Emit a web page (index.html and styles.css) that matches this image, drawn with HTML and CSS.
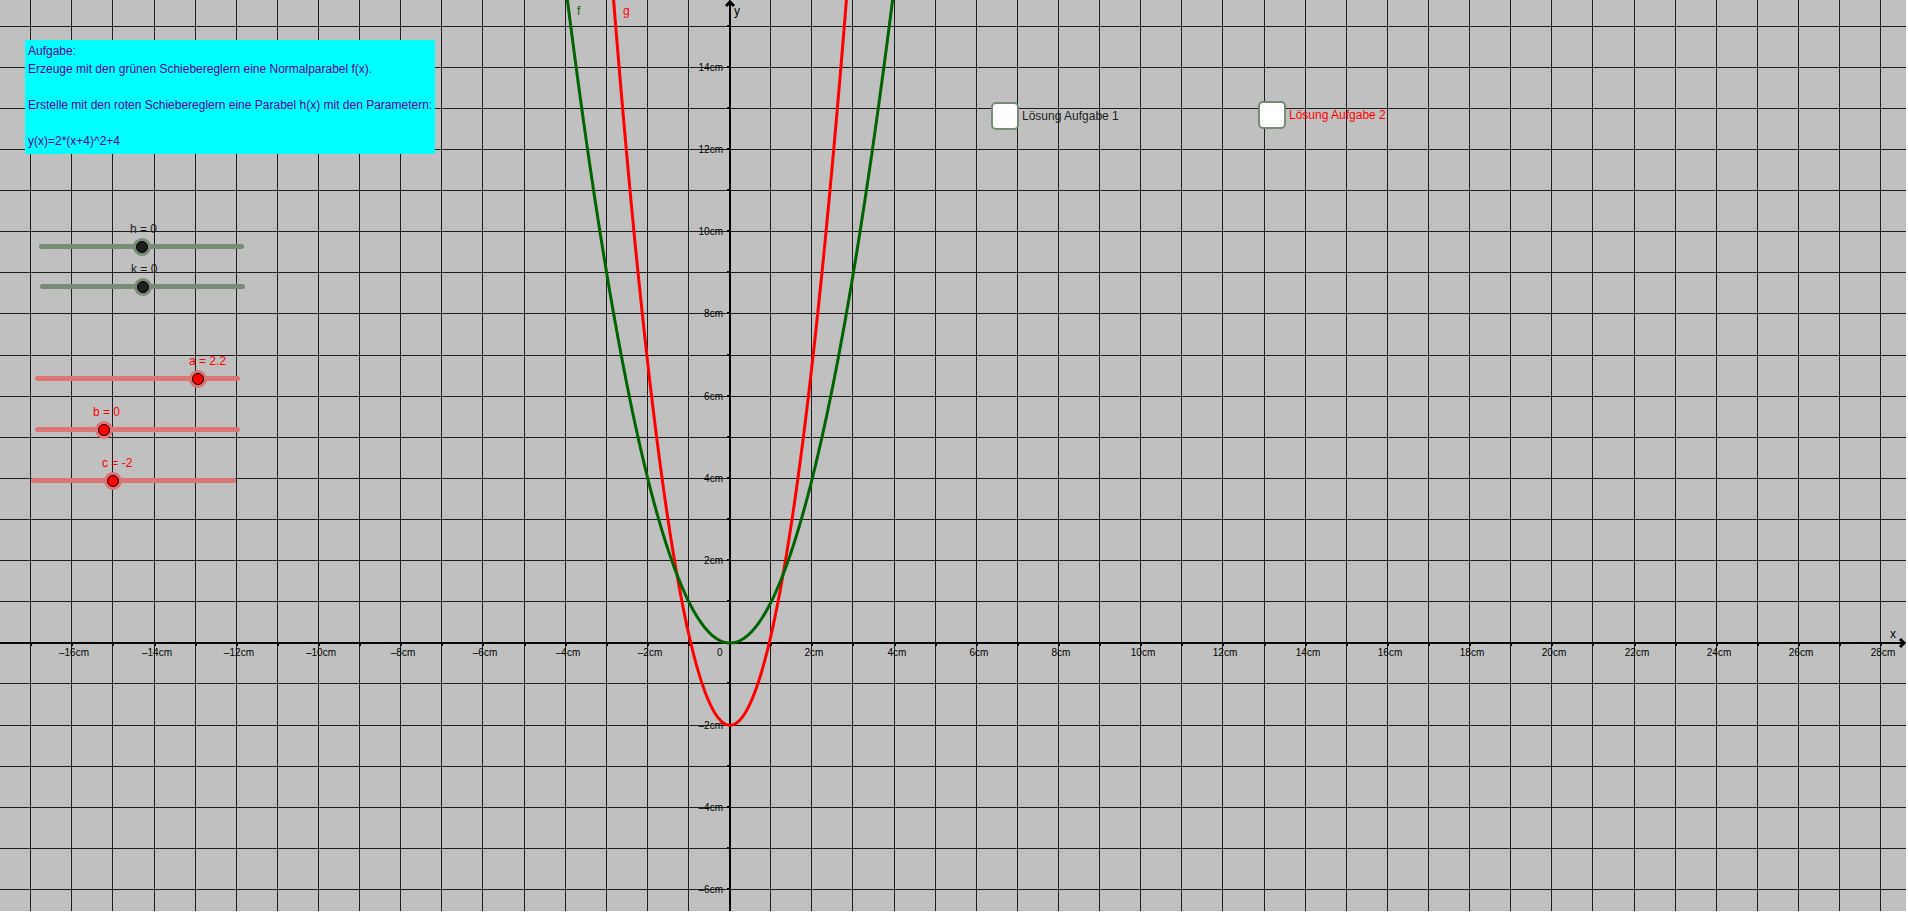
FILE: index.html
```html
<!DOCTYPE html>
<html lang="de">
<head>
<meta charset="utf-8">
<title>Normalparabel</title>
<link rel="stylesheet" href="styles.css">
</head>
<body>
<main class="board">
  <svg class="plot" id="plot" role="img" aria-label="Koordinatensystem mit den Parabeln f und g"></svg>

  <section class="task">
    <p>Aufgabe:</p>
    <p>Erzeuge mit den grünen Schiebereglern eine Normalparabel f(x).</p>
    <p class="spaced">Erstelle mit den roten Schiebereglern eine Parabel h(x) mit den Parametern:</p>
    <p class="spaced">y(x)=2*(x+4)^2+4</p>
  </section>

  <div class="slider slider-h"><label for="h">h = 0</label><input type="range" id="h" min="-5" max="5" step="0.1" value="0"></div>
  <div class="slider slider-k"><label for="k">k = 0</label><input type="range" id="k" min="-5" max="5" step="0.1" value="0"></div>
  <div class="slider red slider-a"><label for="a">a = 2.2</label><input type="range" id="a" min="-5" max="4" step="0.1" value="2.2"></div>
  <div class="slider red slider-b"><label for="b">b = 0</label><input type="range" id="b" min="-5" max="10" step="0.1" value="0"></div>
  <div class="slider red slider-c"><label for="c">c = -2</label><input type="range" id="c" min="-10" max="10" step="0.1" value="-2"></div>

  <label class="check check-one"><input type="checkbox">Lösung Aufgabe 1</label>
  <label class="check check-two"><input type="checkbox">Lösung Aufgabe 2</label>
</main>
<script src="plot.js"></script>
</body>
</html>
```
FILE: styles.css
```css
* { box-sizing: border-box; }

body {
  margin: 0;
  background: #fff;
  color: #1e1e1e;
  font: 12px/18px "Liberation Sans", Arial, sans-serif;
}

.board {
  position: relative;
  height: 100vh;
  overflow: hidden;
  border: solid #fff;
  border-width: 0 2px 2px 0;
  background: #c0c0c0;
}

.plot { display: block; width: 100%; height: 100%; }
.grid { stroke: #1e1e1e; stroke-width: 1; fill: none; shape-rendering: crispEdges; }
.axis { stroke: #000; stroke-width: 2; fill: none; }
.arrow { stroke: #000; stroke-width: 3; fill: none; }
.tick { stroke: #000; stroke-width: 2; fill: none; shape-rendering: crispEdges; }
.curve { stroke-width: 3; fill: none; }
.curve-f { stroke: #006400; }
.curve-g { stroke: #f00; }
.unit { font-size: 10px; fill: #000; }
.name { font-size: 12px; fill: #000; }
.name-f { fill: #006400; }
.name-g { fill: #f00; }

.task {
  position: absolute;
  left: 25px;
  top: 40px;
  padding: 2px 3px 4px;
  background: #0ff;
  color: #50009b;
}
.task p { margin: 0; white-space: nowrap; }
.task .spaced { margin-top: 18px; }

.slider { --tone: #1e1e1e; --rail: #778b77; position: absolute; z-index: 0; width: 205px; }
.slider.red { --tone: #f00; --rail: #dd7575; color: #f00; }
.slider::after {
  content: "";
  position: absolute;
  z-index: -1;
  left: 0;
  right: 0;
  bottom: 7px;
  height: 5px;
  border-radius: 3px;
  background: var(--rail);
}
.slider label { display: block; width: max-content; height: 16px; line-height: 14px; }
.slider input {
  display: block;
  appearance: none;
  width: 213px;
  height: 18px;
  margin: 0 0 0 -4px;
  background: transparent;
}
.slider input::-webkit-slider-runnable-track { height: 12px; }
.slider input::-webkit-slider-thumb {
  appearance: none;
  width: 12px;
  height: 12px;
  border: 1px solid #000;
  border-radius: 50%;
  background: var(--tone);
  box-shadow: 0 0 0 3px var(--rail);
}
.slider-h { left: 39px; top: 222px; }
.slider-h label { margin-left: 91px; }
.slider-k { left: 40px; top: 262px; }
.slider-k label { margin-left: 91px; }
.slider-a { left: 35px; top: 354px; }
.slider-a label { margin-left: 154px; }
.slider-b { left: 35px; top: 405px; }
.slider-b label { margin-left: 58px; }
.slider-c { left: 31px; top: 456px; }
.slider-c label { margin-left: 71px; }

.check { position: absolute; display: flex; align-items: center; gap: 3px; }
.check input {
  appearance: none;
  width: 28px;
  height: 28px;
  margin: 0;
  border: 2px solid #778b77;
  border-radius: 5px;
  background: #fff;
}
.check-one { left: 991px; top: 102px; }
.check-two { left: 1258px; top: 101px; color: #f00; }
```
FILE: plot.js
```js
const svg = document.getElementById('plot');
const unit = 41.11;
const origin = { x: 729.6, y: 642.8 };

function add(tag, attrs, text) {
  const node = document.createElementNS('http://www.w3.org/2000/svg', tag);
  for (const key in attrs) node.setAttribute(key, attrs[key]);
  if (text !== undefined) node.textContent = text;
  svg.appendChild(node);
}

function curve(name, fn) {
  let d = '';
  for (let x = -4.2; x <= 4.2; x += 0.02) {
    const px = 730 + x * unit;
    const py = 643 - fn(x) * unit;
    d += (d ? 'L' : 'M') + px.toFixed(2) + ' ' + py.toFixed(2);
  }
  add('path', { class: 'curve curve-' + name, d });
}

function draw() {
  svg.replaceChildren();
  const { width, height } = svg.getBoundingClientRect();
  const label = n => String(n).replace('-', '–') + 'cm';
  let grid = '', ticks = '';
  const firstX = Math.ceil(-origin.x / unit), lastX = Math.floor((width - origin.x) / unit);
  const lastY = Math.floor(origin.y / unit), firstY = -Math.floor((height - origin.y) / unit);

  for (let i = firstX; i <= lastX; i++) {
    const x = Math.floor(origin.x + i * unit);
    grid += `M${x + 0.5} 0V${height}`;
    if (i) ticks += `M${x + 1} 642V646`;
  }
  for (let i = firstY; i <= lastY; i++) {
    const y = Math.floor(origin.y - i * unit);
    grid += `M0 ${y + 0.5}H${width}`;
    if (i) ticks += `M727 ${y}H731`;
  }
  add('path', { class: 'grid', d: grid });
  add('path', { class: 'axis', d: `M0 643H${width - 2}M730 ${height}V2` });
  add('path', { class: 'arrow', d: `M${width - 6} 639L${width - 2} 643L${width - 6} 647M726 6L730 2L734 6` });
  add('path', { class: 'tick', d: ticks });

  for (let i = firstX + (firstX & 1); i <= lastX; i += 2) {
    if (!i) continue;
    const x = Math.floor(origin.x + i * unit);
    add('text', { class: 'unit', x: x + 3, y: 656, 'text-anchor': 'middle' }, label(i));
  }
  for (let i = firstY + (firstY & 1); i <= lastY; i += 2) {
    if (!i) continue;
    const y = Math.floor(origin.y - i * unit);
    add('text', { class: 'unit', x: 723, y: y + 4, 'text-anchor': 'end' }, label(i));
  }
  add('text', { class: 'unit', x: 717, y: 656 }, '0');
  add('text', { class: 'name', x: width - 16, y: 638 }, 'x');
  add('text', { class: 'name', x: 734, y: 15 }, 'y');

  curve('g', x => 2.2 * x * x - 2);
  curve('f', x => x * x);
  add('text', { class: 'name name-f', x: 577, y: 15 }, 'f');
  add('text', { class: 'name name-g', x: 623, y: 15 }, 'g');
}

draw();
window.addEventListener('resize', draw);
```
